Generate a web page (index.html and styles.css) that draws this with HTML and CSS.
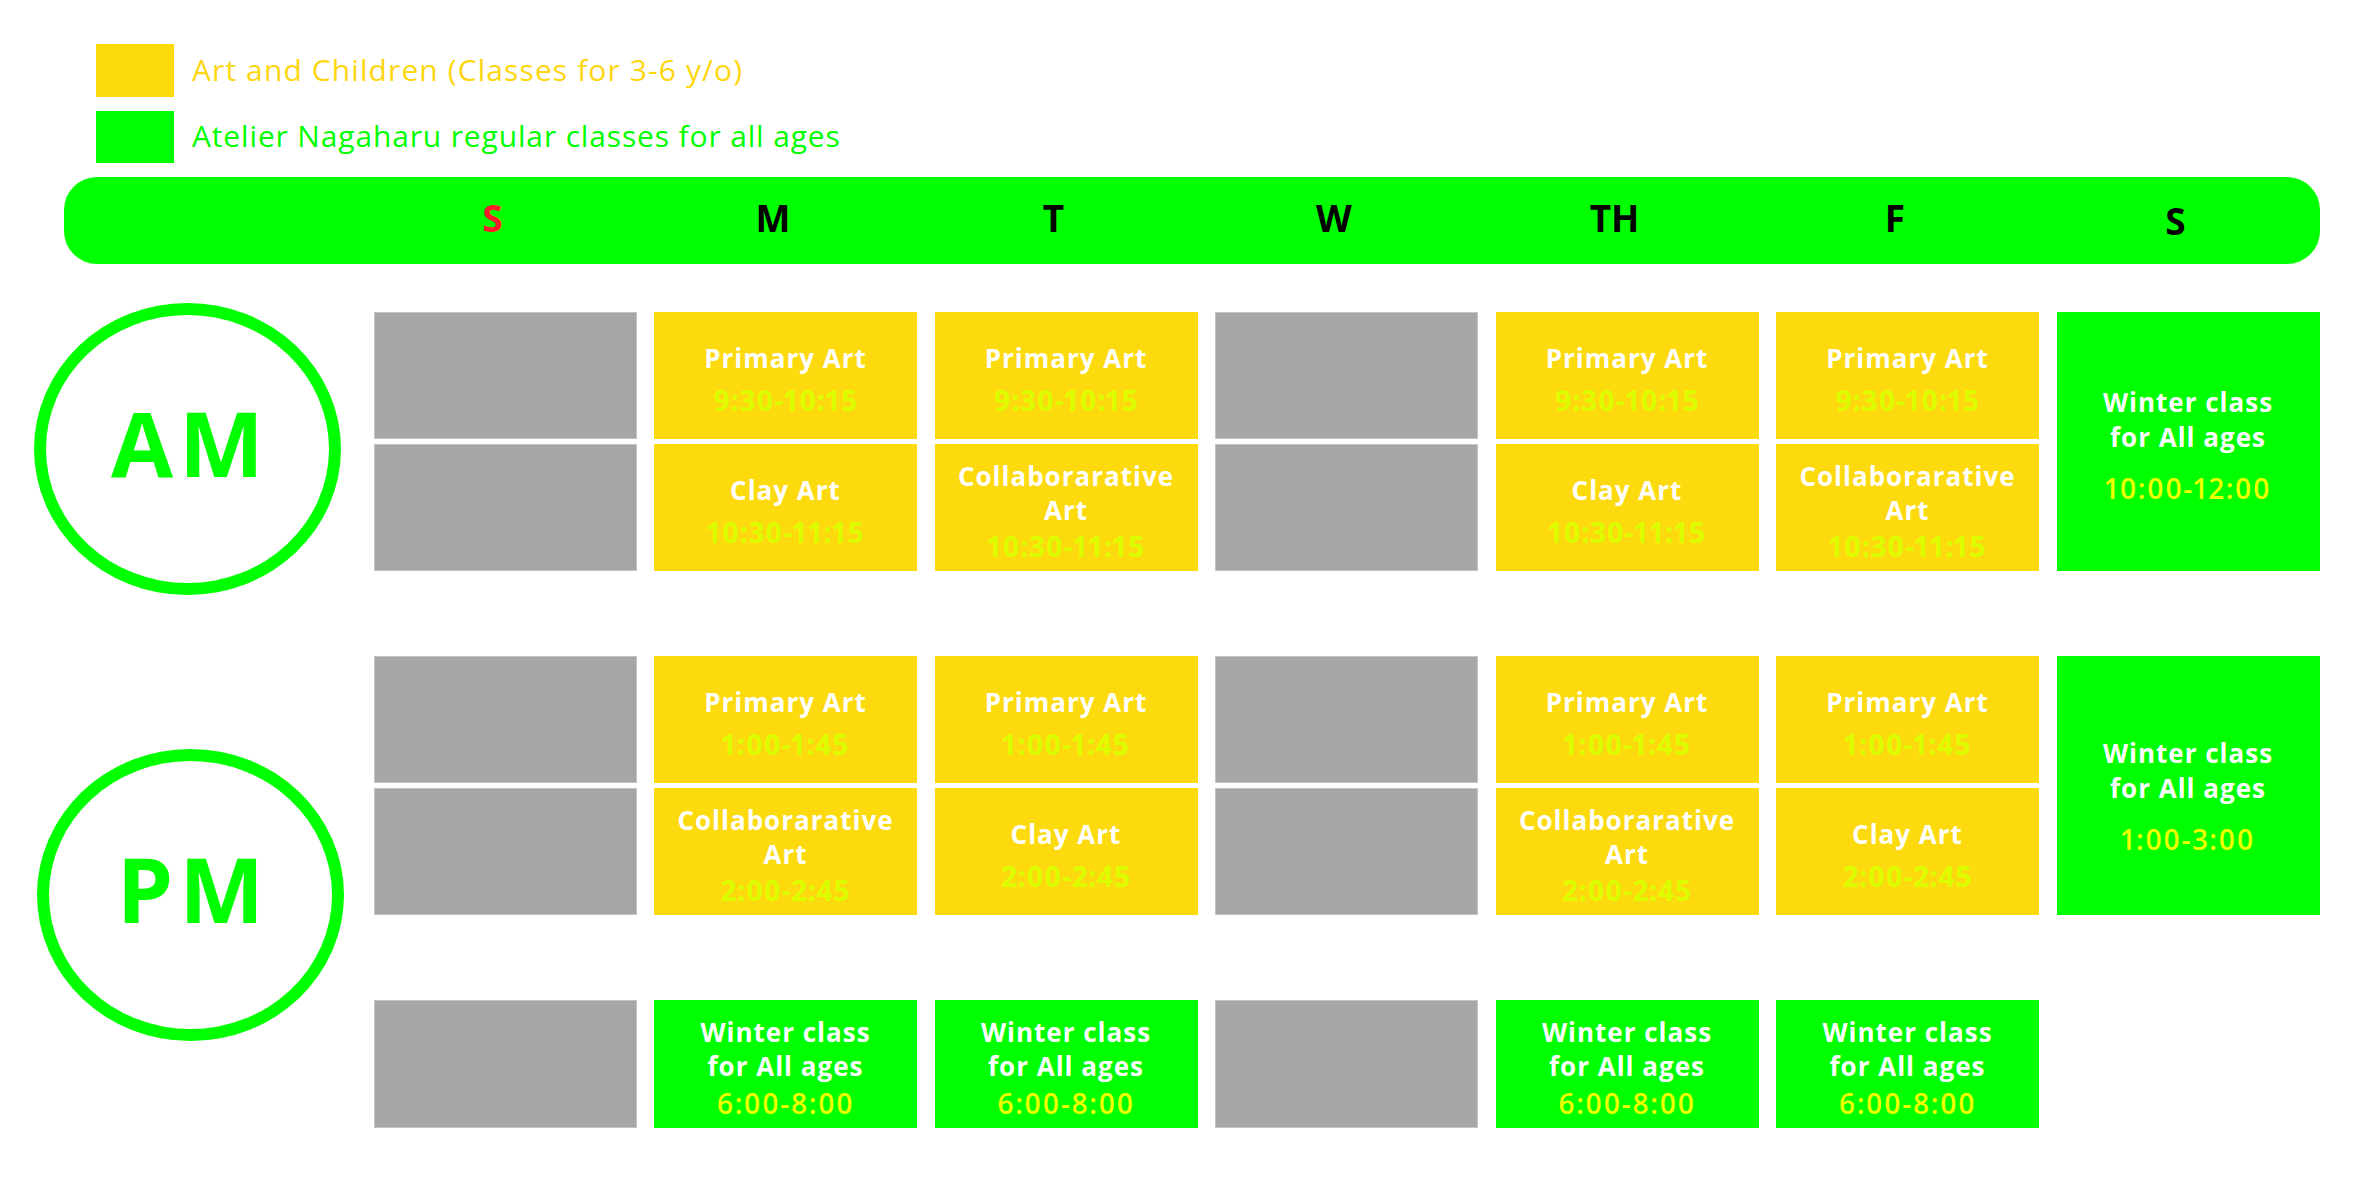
FILE: index.html
```html
<!DOCTYPE html>
<html lang="en">
<head>
<meta charset="utf-8">
<title>Class Schedule</title>
<link rel="stylesheet" href="styles.css">
</head>
<body>
<div class="page">
  <div class="legend">
    <div class="legend-item">
      <span class="swatch swatch-yellow"></span>
      <span class="legend-text text-yellow">Art and Children (Classes for 3-6 y/o)</span>
    </div>
    <div class="legend-item">
      <span class="swatch swatch-green"></span>
      <span class="legend-text text-green">Atelier Nagaharu regular classes for all ages</span>
    </div>
  </div>

  <div class="days">
    <div class="day day-sun">S</div>
    <div class="day">M</div>
    <div class="day">T</div>
    <div class="day">W</div>
    <div class="day">TH</div>
    <div class="day">F</div>
    <div class="day day-sat">S</div>
  </div>

  <div class="section section-am">
    <div class="period period-am"><span>AM</span></div>

    <div class="cell gray"></div>
    <div class="cell yellow"><div class="title">Primary Art</div><div class="time">9:30-10:15</div></div>
    <div class="cell yellow"><div class="title">Primary Art</div><div class="time">9:30-10:15</div></div>
    <div class="cell gray"></div>
    <div class="cell yellow"><div class="title">Primary Art</div><div class="time">9:30-10:15</div></div>
    <div class="cell yellow"><div class="title">Primary Art</div><div class="time">9:30-10:15</div></div>
    <div class="cell green tall"><div class="title">Winter class<br>for All ages</div><div class="time">10:00-12:00</div></div>

    <div class="cell gray"></div>
    <div class="cell yellow"><div class="title">Clay Art</div><div class="time">10:30-11:15</div></div>
    <div class="cell yellow"><div class="title">Collaborarative<br>Art</div><div class="time time-tight">10:30-11:15</div></div>
    <div class="cell gray"></div>
    <div class="cell yellow"><div class="title">Clay Art</div><div class="time">10:30-11:15</div></div>
    <div class="cell yellow"><div class="title">Collaborarative<br>Art</div><div class="time time-tight">10:30-11:15</div></div>
  </div>

  <div class="section section-pm">
    <div class="period period-pm"><span>PM</span></div>

    <div class="cell gray"></div>
    <div class="cell yellow"><div class="title">Primary Art</div><div class="time">1:00-1:45</div></div>
    <div class="cell yellow"><div class="title">Primary Art</div><div class="time">1:00-1:45</div></div>
    <div class="cell gray"></div>
    <div class="cell yellow"><div class="title">Primary Art</div><div class="time">1:00-1:45</div></div>
    <div class="cell yellow"><div class="title">Primary Art</div><div class="time">1:00-1:45</div></div>
    <div class="cell green tall tall-pm"><div class="title">Winter class<br>for All ages</div><div class="time">1:00-3:00</div></div>

    <div class="cell gray"></div>
    <div class="cell yellow"><div class="title">Collaborarative<br>Art</div><div class="time time-tight">2:00-2:45</div></div>
    <div class="cell yellow"><div class="title">Clay Art</div><div class="time">2:00-2:45</div></div>
    <div class="cell gray"></div>
    <div class="cell yellow"><div class="title">Collaborarative<br>Art</div><div class="time time-tight">2:00-2:45</div></div>
    <div class="cell yellow"><div class="title">Clay Art</div><div class="time">2:00-2:45</div></div>

    <div class="cell gray evening"></div>
    <div class="cell green evening"><div class="title">Winter class<br>for All ages</div><div class="time">6:00-8:00</div></div>
    <div class="cell green evening"><div class="title">Winter class<br>for All ages</div><div class="time">6:00-8:00</div></div>
    <div class="cell gray evening"></div>
    <div class="cell green evening"><div class="title">Winter class<br>for All ages</div><div class="time">6:00-8:00</div></div>
    <div class="cell green evening"><div class="title">Winter class<br>for All ages</div><div class="time">6:00-8:00</div></div>
  </div>
</div>
</body>
</html>
```

FILE: styles.css
```css
html, body {
  margin: 0;
  padding: 0;
  background: #ffffff;
}

body {
  font-family: "Open Sans", "DejaVu Sans", sans-serif;
}

.page {
  width: 2362px;
  height: 1181px;
  padding-top: 44px;
  box-sizing: border-box;
  overflow: hidden;
}

/* Legend */
.legend {
  display: flex;
  flex-direction: column;
  gap: 14px;
  padding-left: 96px;
}

.legend-item {
  display: flex;
  align-items: center;
  gap: 18px;
}

.swatch {
  display: block;
  width: 78px;
  height: 53px;
}

.swatch-yellow { background: #fdda0d; }
.swatch-green { background: #00ff00; height: 52px; }

.legend-text {
  font-size: 30px;
  font-weight: 400;
  line-height: 36px;
  padding-bottom: 2px;
}

.text-yellow { color: #fdd60f; letter-spacing: 1.1px; }
.text-green { color: #00ff00; letter-spacing: 0.85px; }

/* Day header bar */
.days {
  margin-top: 14px;
  margin-left: 64px;
  width: 2256px;
  height: 87px;
  border-radius: 33px;
  background: #00ff00;
  display: grid;
  grid-template-columns: repeat(7, 263px);
  column-gap: 17.5px;
  padding-left: 297px;
  padding-bottom: 6px;
  box-sizing: border-box;
  align-items: center;
}

.day {
  text-align: center;
  font-size: 37px;
  font-weight: 700;
  color: #000000;
}

.day-sun { color: #ff1a2b; }
.day-sat { padding-top: 6px; }

/* Schedule sections */
.section {
  display: grid;
  grid-template-columns: 322px repeat(7, 263px);
  column-gap: 17.5px;
  row-gap: 5px;
  margin-left: 34px;
}

.section-am {
  margin-top: 48px;
  grid-template-rows: 127px 127px;
}

.section-pm {
  margin-top: 85px;
  grid-template-rows: 127px 127px 75px 128px;
}

.period {
  grid-column: 1;
  width: 307px;
  height: 292px;
  box-sizing: border-box;
  border: 12px solid #00ff00;
  border-radius: 50%;
  display: flex;
  align-items: center;
  justify-content: center;
  padding-bottom: 14px;
  padding-left: 6px;
  align-self: start;
  justify-self: start;
  color: #00ff00;
  font-size: 90px;
  font-weight: 700;
  letter-spacing: 6px;
}

.period-am {
  grid-row: 1 / 3;
  margin-top: -9px;
}

.period-pm {
  grid-row: 1 / 5;
  margin-top: 93px;
  margin-left: 3px;
}

.cell {
  display: flex;
  flex-direction: column;
  justify-content: center;
  align-items: center;
  text-align: center;
  padding-top: 6px;
  box-sizing: border-box;
}

.gray {
  background: #a6a6a6;
  border: 1px solid #c4c4c4;
}

.yellow { background: #fcda0e; }
.green { background: #00ff00; }

.tall { grid-row: span 2; }
.tall-pm { padding-top: 20px; }

.evening { grid-row: 4; }

.title {
  color: #ffffff;
  font-size: 26px;
  font-weight: 700;
  line-height: 34px;
  letter-spacing: 1px;
}

.time {
  color: #dcff00;
  font-size: 28px;
  font-weight: 700;
  line-height: 34px;
  letter-spacing: 0.8px;
  font-variant-numeric: proportional-nums;
  margin-top: 8px;
}

.time-tight { margin-top: 2px; }

.green .time {
  color: #eeff00;
  font-weight: 600;
  letter-spacing: 1.5px;
}

.tall .title { line-height: 35px; }
.tall .time { margin-top: 16px; }

.evening .time { margin-top: 3px; }
```
